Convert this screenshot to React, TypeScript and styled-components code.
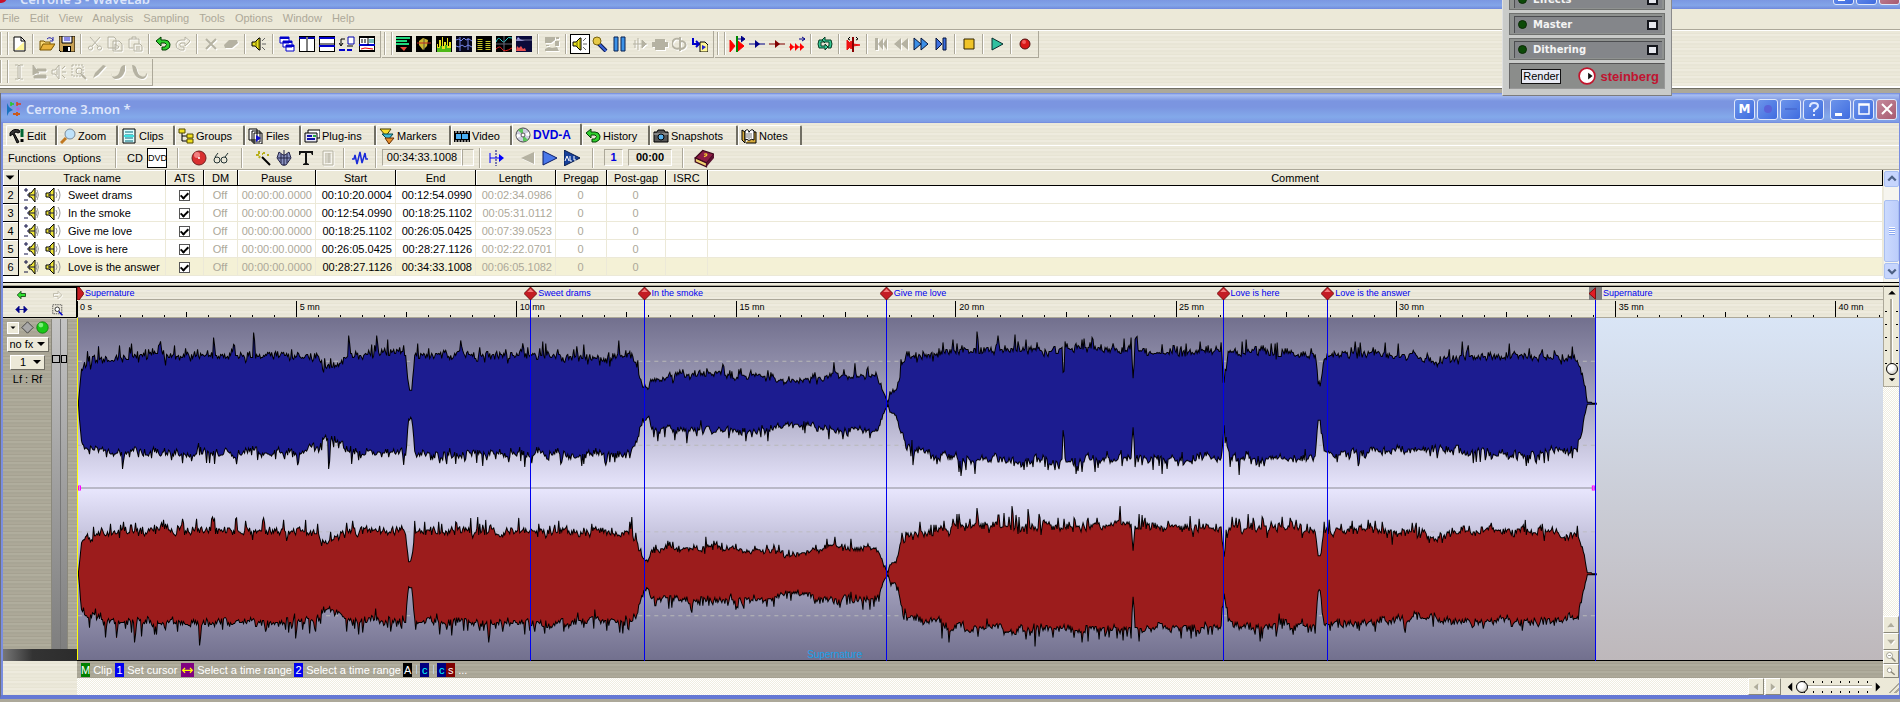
import React from 'react';
import styled, { createGlobalStyle, css } from 'styled-components';

const cream = 'repeating-linear-gradient(180deg,#ebe8d9 0 2px,#e7e4d4 2px 3px,#eeebde 3px 5px,#e8e5d6 5px 7px)';
const stone = 'repeating-linear-gradient(180deg,#aca898 0 2px,#a5a191 2px 3px,#b0ad9d 3px 5px,#a8a595 5px 7px)';
const checker = 'repeating-conic-gradient(#fff 0 25%,#efede0 0 50%) 0 0/2px 2px';

const GlobalStyle = createGlobalStyle`
  *{box-sizing:border-box}
  body{margin:0;background:#aca899;font:11px "Liberation Sans",Arial,sans-serif;color:#000}
  button,select,input{font:inherit;color:inherit;margin:0}
  button{border:0;padding:0;background:none}
`;

/* ---------- icons ---------- */

type Art = Record<string, React.ReactNode>;

const speaker = (
  <>
    <path d="M1 6h3l4-4h1v12H8L4 10H1z" fill="#e8e020" stroke="#000" />
    <path d="M5 5v6M8 3v10" stroke="#6a6400" />
    <path d="M11 8h4M11 5l3-3M11 11l3 3" stroke="#666" />
  </>
);
const grey = '#b5b2a2';

const art: Art = {
  newFile: <><path d="M3 1h7l4 4v10H3z" fill="#fff" stroke="#000" /><path d="M4 14L13 6v8z" fill="#fff79a" /><path d="M10 1v4h4" fill="none" stroke="#000" /></>,
  open: <><path d="M1 14V5h4l1 1h5v3" fill="#f7d774" stroke="#7a5600" /><path d="M1 14l3-6h12l-4 6z" fill="#e8b23a" stroke="#7a5600" /><path d="M8 3q3-3 6 1M14 1v4h-3" fill="none" stroke="#22a" /></>,
  save: <><path d="M0 0h16v16H2L0 14z" fill="#c9a255" stroke="#000" /><path d="M3 0h10v7H3z" fill="#eef" stroke="#000" /><path d="M5 2h6M5 4h6" stroke="#22c" /><path d="M4 10h8v6H4z" fill="#000" /><path d="M9 11h2v4H9z" fill="#fff" /></>,
  cut: <path d="M3 1l8 9M13 1L5 10M3 10a2 2 0 1 0 1 4 2 2 0 0 0-1-4M12 10a2 2 0 1 0 1 4 2 2 0 0 0-1-4" fill="none" stroke={grey} />,
  copy: <path d="M1 1h6l2 2v9H1zM6 5h6l3 3v7H6zM8 8l4 3-4 3z" fill="none" stroke={grey} />,
  paste: <path d="M2 3h10v5M2 3v9h4M5 3V1h4v2M7 8h6l2 2v5H7zM9 11h4M9 13h4" fill="none" stroke={grey} />,
  undo: <path d="M6 1L1 5l5 5V7h4q3 1 0 4H7v3h4q5-2 4-6-1-4-5-4H6z" fill="#2fd02f" stroke="#033d03" />,
  redo: <path d="M10 1l5 4-5 5V7H6q-3 1 0 4h3v3H5Q0 12 1 8q1-4 5-4h4z" fill="none" stroke={grey} />,
  del: <path d="M3 3l10 10M13 3L3 13" stroke={grey} strokeWidth="2" />,
  erase: <path d="M6 4h8l1 3-6 5H2L1 9z" fill={grey} />,
  speaker,
  cascade: <g fill="#fff" stroke="#00c"><path d="M1 1h9v6H1zM4 5h9v6H4zM7 9h8v6H7z" /><path d="M1 2h9M4 6h9M7 10h8" strokeWidth="2" /></g>,
  tileV: <><path d="M0 0h16v16H0z" fill="#fff" stroke="#000" strokeWidth="2" /><path d="M8 0v16" stroke="#000" /><path d="M0 2h7M9 2h7" stroke="#00a" strokeWidth="2" /></>,
  tileH: <><path d="M0 0h16v16H0z" fill="#fff" stroke="#000" strokeWidth="2" /><path d="M0 8h16" stroke="#000" /><path d="M0 2h16M0 10h16" stroke="#00c" strokeWidth="2" /></>,
  arrange: <><path d="M9 1h6v7H9z" fill="#fff" stroke="#00a" /><path d="M6 3H2v6M0 7l2 3 2-3M8 10h6" fill="none" stroke="#000" /><path d="M0 13h6v2H0zM8 13h5v2H8z" fill="#00c" /></>,
  layout: <><path d="M0 1h16v14H0z" fill="#fff" stroke="#000" strokeWidth="2" /><path d="M0 9h16" stroke="#00c" strokeWidth="2" /><path d="M9 1v8M2 4h2M5 4h2M2 6h2M5 6h2" stroke="#000" /><path d="M10 3h5v4h-5z" fill="#7bb" /><path d="M2 13l4-1 8 1" stroke="#e00" fill="none" /></>,
  meter1: <><path d="M0 0h16v16H0z" /><path d="M0 2h14M0 5h11M0 8h13" stroke="#1fd67c" strokeWidth="2" /><path d="M4 11h7l-3 4z" fill="#e84a3c" /></>,
  meter2: <><path d="M0 0h16v16H0z" /><path d="M3 5l4-3 5 2-1 6-4 4-4-5z" fill="#cbb62e" /><path d="M8 3v11" stroke="#554" /><path d="M1 7h14" stroke="#b22" /></>,
  meter3: <><path d="M0 0h16v16H0z" /><path d="M1 16V8h1v3h1V4h2v8h1V1h1v9h1V6h2v5h1V2h1v8h1V6h2v10z" fill="#e8e01c" /><path d="M1 16V12h3v-2h2v3h3v-4h2v3h4v4z" fill="#4db818" /></>,
  meter4: <><path d="M0 0h16v16H0z" fill="#06061a" /><path d="M0 4l3-1 2 2 3-3 2 2 3-1 3 2M0 10l3 1 3-2 3 2 3-2 4 2M4 1v14M12 2v12" stroke="#7484e8" fill="none" /></>,
  meter5: <><path d="M0 0h16v16H0z" /><path d="M4 3v12M12 5v10" stroke="#c9c62c" strokeWidth="5" strokeDasharray="1 1" /></>,
  meter6: <><path d="M0 0h16v16H0z" /><path d="M0 6q2-6 5-2t5 0 6-2" stroke="#2ed3d3" fill="none" /><path d="M0 8h16M8 0v16" stroke="#667" /><path d="M0 13q4-4 6 0t10-1" stroke="#e02020" fill="none" /></>,
  meter7: <><path d="M0 0h16v16H0z" fill="#0a0a3a" /><path d="M0 5l2-4 2 2 2 1 3 1H0z" fill="#a4a4f4" /><path d="M0 4h16" stroke="#779" /><path d="M0 15l1-5 2 2 2-2 2 3 2-1 1 3z" fill="#e85050" /></>,
  scene: <><path d="M1 1h10v3l-4 3H1zM11 5h4v5h-4zM1 13l4-2 3 1 5-1 2 4H1z" fill={grey} /><path d="M12 1h3v2h-3zM2 9h3v1H2z" fill={grey} /></>,
  mic: <><path d="M6 7l8 8" stroke="#0a1a55" strokeWidth="4" /><path d="M7 8l7 7" stroke="#3a62d8" strokeWidth="2" /><circle cx="5" cy="5" r="4" fill="#e6c948" stroke="#7a6410" /></>,
  pause: <g fill="#3c92e8" stroke="#082050"><path d="M2 1h4v14H2zM9 1h4v14H9z" /></g>,
  jog: <path d="M1 8h14M3 4v8M6 2v12M10 4l4 4-4 4z" fill={grey} stroke={grey} />,
  bar: <path d="M0 6h16v5H0zM3 3h10v11H3z" fill={grey} />,
  loopG: <path d="M7 3a5 5 0 1 0 2 8M8 5a5 4 0 1 1 1 8M8 1v14" fill="none" stroke={grey} strokeWidth="2" />,
  toFile: <><path d="M1 2v6h5M4 5l3 3-3 3" fill="none" stroke="#00c" strokeWidth="2" /><path d="M8 6h5l3 3v7H8z" fill="#fff79a" stroke="#000" /><path d="M10 9l4 2-4 3z" fill="#22c" /></>,
  seek1: <><path d="M1 4l5 6-5 6zM9 5l6 5-6 5z" fill="#f00" stroke="#f00" /><path d="M8 0v16" stroke="#080" strokeWidth="2" /><path d="M9 3h6M12 0l4 3-4 3" fill="#008" stroke="#008" /></>,
  seek2: <><path d="M0 8h16" stroke="#008" /><path d="M6 4l5 4-5 4z" fill="#008" /></>,
  seek3: <><path d="M0 8h16" stroke="#800000" /><path d="M6 4l5 4-5 4z" fill="#800000" /></>,
  seek4: <><path d="M0 11h15" stroke="#f00" /><path d="M1 7l4 4-4 4zM6 7l4 4-4 4zM11 7l4 4-4 4z" fill="#f00" /><path d="M10 3h6M13 1l3 2-3 2" fill="none" stroke="#008" /></>,
  loop: <path d="M5 4H2Q0 8 2 12h6v2l3-3-3-3v2H4V6h8v4h-1v2h3q2-4 0-8H8V1L5 4l3 3" fill="#35c896" stroke="#083c22" />,
  scrub: <><path d="M2 4l3 3 1-2 2 3 7 1-7 1-2 3-1-2-3 3z" fill="#e11" stroke="#e11" /><path d="M8 1v15" stroke="#800" strokeWidth="2" /><path d="M5 1l-2 2 2 1M11 1l2 2-2 1" fill="none" stroke="#000" /></>,
  first: <path d="M2 2h3v12H2zM10 2v12L5 8zM14 2v12l-4-6z" fill={grey} />,
  rew: <path d="M8 2v12L1 8zM15 2v12L8 8z" fill={grey} />,
  fwd: <path d="M1 2l7 6-7 6zM8 2l7 6-7 6z" fill="#3c8fe6" stroke="#06153c" />,
  last: <path d="M3 2l6 6-6 6zM10 2h3v12h-3z" fill="#3c6fe0" stroke="#06153c" />,
  stop: <path d="M3 3h10v10H3z" fill="#f0c428" stroke="#302400" />,
  play: <path d="M3 2l11 6-11 6z" fill="#30c0a0" stroke="#062c2c" />,
  rec: <><circle cx="8" cy="8" r="5" fill="#d81818" stroke="#501010" /><circle cx="7" cy="6" r="2" fill="#f25c5c" /></>,
  ibeam: <path d="M4 1h3l1 1 1-1h3M4 15h3l1-1 1 1h3M7 2v12M9 2v12" fill="none" stroke={grey} />,
  pointer: <path d="M2 1v10l3-2h3L2 1M6 5h9v2H6zM7 11h8v3H3v-2z" fill={grey} stroke={grey} />,
  spkG: <path d="M1 6h3l4-5v14L4 10H1zM11 8h4M11 5l3-3M11 11l3 3M6 5v6" fill="none" stroke={grey} />,
  zoomG: <><path d="M1 1h11v11H1z" fill="none" stroke={grey} strokeDasharray="2 1" /><circle cx="8" cy="7" r="3" fill="none" stroke={grey} /><path d="M10 10l5 5" stroke={grey} strokeWidth="2" /></>,
  penG: <path d="M2 14l2-5 8-8 3 1-8 9z" fill={grey} />,
  fadeIn: <path d="M0 9q0 5 5 3 3-1 4-6 1-5 5-5v6q-3 8-9 8-4 0-5-6z" fill={grey} />,
  fadeOut: <path d="M1 1q4 0 5 5 1 5 4 6 5 2 5-3l1 1q-1 5-5 5-6 0-9-8z" fill={grey} />,
  hammer: <><path d="M1 5q3-5 9-3l1 2-2 1-2-1-2 1 5 9-2 1L4 6 1 8z" fill="#333" stroke="#000" /><path d="M13 1v8" stroke="#063" strokeWidth="3" /><path d="M13 11v3" stroke="#000" strokeWidth="3" /></>,
  lens: <><path d="M1 15l5-5" stroke="#c07820" strokeWidth="3" /><circle cx="10" cy="6" r="5" fill="#bfe2fa" stroke="#7a8a99" /></>,
  clips: <><path d="M2 1h12v14H2z" fill="#dff" stroke="#000" /><path d="M4 4h8M4 7h8M4 10h8M4 13h8" stroke="#067" /><path d="M3 8h10" stroke="#3de0e0" strokeWidth="2" /></>,
  groups: <><path d="M4 4v9h6M4 8h6" fill="none" stroke="#000" /><path d="M1 1h6v4H1zM9 6h6v4H9zM9 11h6v4H9z" fill="#f0e020" stroke="#554a00" /></>,
  files: <><path d="M1 1h8v11H1zM4 3h8v11H4zM6 5h8v11H6z" fill="#fff" stroke="#000" /><path d="M8 7l5 3-5 4z" fill="#11c" /></>,
  plug: <><path d="M4 2h12v8H4z" fill="#fff" stroke="#000" /><path d="M1 5h12v9H1z" fill="#e8e8f4" stroke="#000" /><path d="M3 8h5M3 11h8" stroke="#11a" strokeWidth="2" /><path d="M9 8h3" stroke="#2a4" strokeWidth="2" /></>,
  markers: <><path d="M1 1h11l-5 7z" fill="#f7dc2c" stroke="#443c00" /><path d="M3 6h11l-5 6z" fill="#3fb8d8" stroke="#044" /><path d="M6 10h9l-5 6z" fill="#e8902c" stroke="#642c00" /></>,
  video: <><path d="M0 3h16v11H0z" /><path d="M1 4h14M1 13h14" stroke="#fff" strokeDasharray="2 1" /><path d="M2 6h5v5H2zM8 6h6v5H8z" fill="#4ab0f4" /></>,
  disc: <><circle cx="8" cy="8" r="7" fill="#ccd" stroke="#444" /><path d="M8 8L3 3q3-2 5-1zM8 8l5 5q-2 2-5 1z" fill="#5ac85a" /><path d="M8 8l6-3q1 3 0 4zM8 8l-6 3q-1-3 0-4z" fill="#fff" /><circle cx="8" cy="8" r="2" fill="#fff" stroke="#555" /></>,
  camera: <><path d="M1 4h3l1-2h6l1 2h3v10H1z" fill="#555" stroke="#000" /><path d="M1 6h14" stroke="#bbb" /><circle cx="8" cy="9" r="3" fill="#5ab4f0" stroke="#000" /></>,
  notes: <><path d="M1 2l3 2v11l-3-3zM13 4h2v11H5" fill="#d8ac3c" stroke="#000" /><path d="M4 3q3-3 4 1 3-4 5-1v9q-3-2-5 1-2-3-4-1z" fill="#fff" stroke="#000" /><path d="M8 4v9M6 5v5M10 5v5" stroke="#777" /></>,
  recBig: <><circle cx="8" cy="8" r="7" fill="#d83030" stroke="#702020" /><circle cx="6" cy="5" r="3" fill="#f28080" /><circle cx="8" cy="8" r="1" fill="#fff" /></>,
  glasses: <g fill="none" stroke="#233" ><circle cx="4" cy="10" r="3" /><circle cx="11" cy="10" r="3" /><path d="M2 7l3-4M12 7l3-4" /></g>,
  wand: <><path d="M7 7l8 8" stroke="#000" strokeWidth="2" /><path d="M4 1v3M1 5h3M9 2v2M4 8l1-2M7 4h1M12 5h2" stroke="#b9b01c" strokeWidth="2" /></>,
  wrench: <><path d="M3 2l4 3 2 0 4-3 2 6-5 7H6L1 8z" fill="#8a92c0" stroke="#224" /><path d="M8 0v16M2 8h12M5 4v9M11 4v9" stroke="#224" /></>,
  tee: <path d="M1 1h14v4h-1l-1-2H9v10l2 1v1H5v-1l2-1V3H3L2 5H1z" fill="#111" />,
  doc: <path d="M3 1h10v14H3zM5 4h6M5 6h6M5 8h6M5 10h6M5 12h6M9 3v10" fill="none" stroke={grey} />,
  signal: <path d="M0 9h2l1-4 2 9 3-12 2 11 3-10 1 6h2" fill="none" stroke="#1a2ad8" strokeWidth="1.5" />,
  toMark: <><path d="M8 0v16" stroke="#008" strokeDasharray="2 1" /><path d="M2 3v10M2 8h12" stroke="#00f" /><path d="M11 4l5 4-5 4z" fill="#00f" /></>,
  playG: <path d="M14 2v12L1 8z" fill={grey} />,
  playB: <path d="M1 1l14 7-14 7z" fill="#4a78ea" stroke="#0a1c68" />,
  playAll: <><path d="M0 0l16 8L0 16z" fill="#17409a" stroke="#081c48" /><path d="M1 11l2-5 2 5M6 6v5h2M10 6v4h2" fill="none" stroke="#fff" /></>,
  book: <><path d="M1 8L7 2l9 3-6 7z" fill="#8c1c44" stroke="#40081c" /><path d="M1 8l9 4v3l-9-4z" fill="#f0d070" stroke="#40081c" /><path d="M10 12l6-7v3l-6 7z" fill="#5c1030" /><path d="M8 5q3-1 2 1l-2 1" fill="none" stroke="#f7d030" /></>,
  spkPM: <><path d="M5 6h2l4-5v14L7 10H5z" fill="#f0e838" stroke="#000" /><path d="M0 3h4M2 1v4M0 13h4M3 8h8" stroke="#114" /><path d="M13 3q3 5 0 10M12 5q2 3 0 6" fill="none" stroke="#999" /></>,
  spk: <><path d="M1 6h3l5-5v14l-5-5H1z" fill="#f0e838" stroke="#000" /><path d="M3 8h6M5 5v6" stroke="#114" /><path d="M13 2q4 6 0 12M11 5q2 3 0 6" fill="none" stroke="#999" /></>,
  green: <path d="M8 3L3 8l5 5v-3h6V6H8z" fill="#2fe02f" stroke="#053005" />,
  ghost: <path d="M8 3l5 5-5 5v-3H2V6h6z" fill="none" stroke={grey} />,
  both: <path d="M2 8h12M5 4L1 8l4 4zM11 4l4 4-4 4z" fill="#008" stroke="#008" />,
  region: <><path d="M1 1h12v12H1z" fill="none" stroke="#333" strokeDasharray="2 1" /><circle cx="7" cy="7" r="3" fill="#fff" stroke="#000" /><path d="M9 10l5 5" stroke="#00c" strokeWidth="2" /></>,
  diamondG: <path d="M8 1l7 7-7 7-7-7z" fill="#a8a8a8" stroke="#333" />,
  ball: <><circle cx="8" cy="8" r="7" fill="#18c818" stroke="#0a7a0a" /><circle cx="6" cy="5" r="3" fill="#7af07a" /></>,
  diamond: <><path d="M8 0l8 8-8 8-8-8z" fill="#c41c24" stroke="#5c0000" /><path d="M8 2l4 4H4z" fill="#f07a7a" /></>,
  cueIn: <path d="M8 0h2l6 8-6 8H8z" fill="#c81c24" stroke="#700000" />,
  cueOut: <><path d="M0 0h16v16H0z" fill="#808080" /><path d="M8 1v14L0 8z" fill="#e01c24" stroke="#700000" /></>,
  magA: <><circle cx="6" cy="6" r="4" fill="#fff" stroke="#8a8778" /><path d="M9 9l5 5" stroke="#8a8778" strokeWidth="2" /><path d="M4 6h4" stroke="#8a8778" /></>,
  magB: <><circle cx="6" cy="7" r="3" fill="#fff" stroke="#8a8778" /><path d="M8 9l5 4" stroke="#8a8778" strokeWidth="2" /></>,
  triU: <path d="M8 5l5 6H3z" fill="#b0ad9c" />,
  triD: <path d="M3 5h10l-5 6z" fill="#b0ad9c" />,
  triL: <path d="M11 3v10L5 8z" fill="#b0ad9c" />,
  triR: <path d="M5 3l6 5-6 5z" fill="#b0ad9c" />,
  blackU: <path d="M8 5l5 5H3z" />,
  blackD: <path d="M3 5h10l-5 5z" />,
  blackL: <path d="M11 2v12L5 8z" />,
  blackR: <path d="M5 2l6 6-6 6z" />,
  chevU: <path d="M3 10l5-5 5 5" fill="none" stroke="#4d6185" strokeWidth="3" />,
  chevD: <path d="M3 6l5 5 5-5" fill="none" stroke="#4d6185" strokeWidth="3" />,
  mono: <><path d="M1 2v13l2-4 4-2-4-3z" fill="#1a74c0" /><path d="M5 1v4M5 3h3" stroke="#2c2" strokeWidth="1.5" /><path d="M11 1v4M11 3h4" stroke="#e03c1c" strokeWidth="1.5" /><path d="M10 8h4M12 6v4" stroke="#c45ad8" /><path d="M7 13h7M11 11v4" stroke="#c85a1c" strokeWidth="2" /></>,
  steinberg: <><circle cx="8" cy="8" r="7" fill="#fff" stroke="#c2142c" strokeWidth="1.5" /><path d="M9 5l4 3-4 3z" fill="#111" /></>,
};

const Svg = styled.svg<{ $s: number; $ghost?: boolean }>`
  display:block;flex:none;width:${p => p.$s}px;height:${p => p.$s}px;
  ${p => p.$ghost && css`filter:drop-shadow(1px 1px 0 #fff);`}
`;
const ghosts = new Set(['cut', 'copy', 'paste', 'redo', 'del', 'erase', 'scene', 'jog', 'bar', 'loopG', 'first', 'rew', 'ibeam', 'pointer', 'spkG', 'zoomG', 'penG', 'fadeIn', 'fadeOut', 'doc', 'playG', 'ghost', 'triU', 'triD', 'triL', 'triR']);
const Icon = ({ name, size = 16 }: { name: string; size?: number }) => (
  <Svg $s={size} $ghost={ghosts.has(name)} viewBox="0 0 16 16" aria-hidden="true">{art[name]}</Svg>
);

/* ---------- application frame ---------- */

const Frame = styled.div`display:flex;flex-direction:column;height:100vh;min-height:560px;position:relative;overflow:hidden;`;
const AppTitle = styled.header`
  height:9px;flex:none;display:flex;align-items:flex-end;gap:2px;padding:0 0 3px 20px;overflow:hidden;position:relative;
  background:linear-gradient(#7b97e2,#83a5e8 60%,#7089dc);color:#dbe4fa;font:600 13px/14px "Noto Sans",sans-serif;
`;
const AppLogo = styled.span`position:absolute;left:-5px;top:-9px;width:12px;height:12px;border-radius:50%;background:#c8102c;`;
const AppButtons = styled.div`position:absolute;right:0;bottom:4px;display:flex;gap:2px;`;
const MenuBar = styled.nav`
  height:21px;flex:none;display:flex;align-items:center;gap:10px;padding:0 2px 2px;background:#ece9d8;border-bottom:1px solid #aca899;color:#aca899;
`;
const ToolArea = styled.div`flex:none;background:${cream};border-top:1px solid #fff;border-bottom:2px solid #fff;height:58px;`;
const ToolRow = styled.div`display:flex;height:28px;`;
const ToolGroup = styled.div<{ $lead?: boolean }>`
  display:flex;align-items:center;height:27px;padding:0 3px 0 ${p => (p.$lead ? 9 : 12)}px;position:relative;
  border-right:1px solid #aca899;border-bottom:1px solid #aca899;margin-right:1px;
  &::before{content:"";position:absolute;left:${p => (p.$lead ? 0 : 2)}px;top:1px;bottom:2px;width:6px;
    border:solid #aca899;border-width:0 1px;box-shadow:inset 1px 0 #fff,1px 0 #fff;}
`;
const Tool = styled.button<{ $on?: boolean }>`
  width:20px;height:20px;display:grid;place-items:center;
  ${p => p.$on && css`background:#fff;border:1px solid #000;`}
`;
const Sep = styled.span<{ $w?: number }>`
  width:${p => p.$w ?? 8}px;height:20px;flex:none;background:linear-gradient(90deg,#aca899 50%,#fff 50%) center/2px 100% no-repeat;
`;
const Divider = styled.div`height:5px;flex:none;background:#aca899;border-top:1px solid #716f64;`;

const Tools = ({ items, lead }: { items: string; lead?: boolean }) => (
  <ToolGroup $lead={lead}>
    {items.split(' ').map((n, i) => n === '|' ? <Sep key={i} /> : (
      <Tool key={i} $on={n.endsWith('*')} aria-label={n.replace('*', '')}><Icon name={n.replace('*', '')} /></Tool>
    ))}
  </ToolGroup>
);

/* ---------- master section panel ---------- */

const Master = styled.aside`
  position:absolute;right:228px;top:-15px;width:170px;height:111px;padding:2px 6px 6px;display:flex;flex-direction:column;gap:3px;
  background:#c9cbc9;border:1px solid #dfe0df;border-right-color:#8a8a8a;border-bottom-color:#7c7c7c;
`;
const Slot = styled.div`
  height:22px;flex:none;display:flex;align-items:center;gap:6px;padding:0 4px;color:#f4f4f4;font:bold 10px "DejaVu Sans",sans-serif;
  background:#84868a;border:3px solid #8f9290;border-width:3px 3px 2px 5px;box-shadow:inset 1px 1px #4c4d50;outline:1px solid #6f716f;outline-offset:-1px;
`;
const Led = styled.i`width:9px;height:9px;border-radius:50%;background:#0c4a08;border:1px solid #0a2a06;`;
const SlotBox = styled.button`margin-left:auto;width:11px;height:10px;background:#e6e8ee;border:2px solid #14161c;`;
const Footer = styled.div`
  flex:1;display:flex;align-items:center;padding:0 5px 0 11px;background:#8b8d8b;border:1px solid #555;border-color:#555 #999 #999 #666;
  color:#c01430;font-weight:bold;font-size:13px;
`;
const Render = styled.button`width:41px;height:15px;background:#e8eaf4;border:1px solid #111;color:#000;font-size:11px;font-weight:normal;line-height:12px;margin-right:17px;`;
const Brand = styled.span`margin-left:4px;`;

/* ---------- montage window ---------- */

const Win = styled.section`flex:1;min-height:0;display:flex;flex-direction:column;padding:0 1px 0 2px;background:#7a8ee0;border-left:1px solid #6f6f78;border-bottom:4px solid #6478d4;margin-bottom:3px;`;
const WinTitle = styled.header`
  height:30px;flex:none;display:flex;align-items:center;gap:4px;padding:2px 2px 0 5px;margin-left:-2px;
  background:linear-gradient(#6f87dc 0,#a8bef2 2px,#7b95e0 8px,#7b95e0 14px,#83a9ea 24px,#7d9ae4 29px,#6c82da);
  color:#dde5fb;font:600 13px "Noto Sans","Open Sans",sans-serif;
`;
const WinButtons = styled.div`margin-left:auto;display:flex;gap:2px;`;
const WinButton = styled.button<{ $close?: boolean; $gap?: boolean; $dim?: boolean }>`
  width:21px;height:21px;border:1px solid #dfe8fb;border-radius:3px;display:grid;place-items:center;color:${p => (p.$dim ? '#5a62d8' : '#fff')};
  background:${p => (p.$close ? 'linear-gradient(135deg,#c48a9c,#a85a70)' : 'linear-gradient(135deg,#6c94ea,#3f6ce0)')};
  margin-left:${p => (p.$gap ? 4 : 0)}px;font:bold 12px "DejaVu Sans",sans-serif;
`;
const Tabs = styled.div`height:23px;flex:none;display:flex;align-items:flex-end;padding-left:3px;background:${cream};border-bottom:1px solid #fff;`;
const Tab = styled.button<{ $w: number; $on?: boolean }>`
  width:${p => p.$w}px;height:20px;display:flex;align-items:center;gap:2px;padding-left:2px;text-align:left;white-space:nowrap;
  border-top:1px solid #fff;border-left:1px solid #fff;border-right:2px solid #716f64;border-radius:2px 2px 0 0;
  ${p => p.$on && css`height:22px;color:#0000e0;font-weight:bold;font-size:12px;`}
`;
const Strip = styled.div`height:24px;flex:none;display:flex;align-items:center;padding-left:5px;background:${cream};border-bottom:1px solid #aca899;`;
const StripMenu = styled.button<{ $w: number }>`width:${p => p.$w}px;text-align:left;flex:none;`;
const Word = styled.button<{ $on?: boolean }>`
  width:20px;height:20px;font-size:11px;
  ${p => p.$on && css`background:#fff;border:1px solid #000;font-size:9px;`}
`;
const Readout = styled.output<{ $w: number; $tone?: string }>`
  width:${p => p.$w}px;height:17px;line-height:15px;text-align:center;border:1px solid #aca899;border-right-color:#fff;border-bottom-color:#fff;
  color:${p => p.$tone ?? '#000'};font-weight:${p => (p.$tone ? 'bold' : 'normal')};
`;
const Gap = styled.span<{ $w: number }>`width:${p => p.$w}px;flex:none;`;

/* ---------- track table ---------- */

const ListPane = styled.div`flex:none;height:113px;display:flex;background:#fff;border-bottom:1px solid #000;`;
const Table = styled.table`
  flex:1;width:100%;min-width:0;table-layout:fixed;border-collapse:separate;border-spacing:0;align-self:flex-start;
`;
const Th = styled.th`
  height:16px;padding:0;font-weight:normal;text-align:center;background:#ece9d8;border-right:1px solid #000;border-bottom:1px solid #000;
  box-shadow:inset 1px 1px #fff;line-height:14px;
`;
const Row = styled.tr<{ $sel?: boolean }>`td{background:${p => (p.$sel ? '#f4f1d6' : '#fff')}}`;
const Td = styled.td<{ $a?: string; $dim?: boolean }>`
  height:18px;padding:0 3px 0 2px;text-align:${p => p.$a ?? 'center'};color:${p => (p.$dim ? '#aca899' : '#000')};
  border-right:1px solid #ece9d8;border-bottom:1px solid #ece9d8;line-height:14px;white-space:nowrap;overflow:hidden;
`;
const RowHead = styled.th`
  height:18px;padding:0;font-weight:normal;text-align:center;background:#ece9d8;border-right:1px solid #000;border-bottom:1px solid #000;box-shadow:inset 1px 1px #fff;line-height:14px;
`;
const Track = styled.div`display:flex;align-items:center;gap:5px;padding-left:3px;`;
const TrackText = styled.span`margin-left:2px;`;
const Check = styled.input`
  appearance:none;width:11px;height:11px;border:1px solid #555;background:#fff;display:inline-grid;place-items:center;vertical-align:middle;
  &:checked::before{content:"";width:3px;height:6px;border:solid #000;border-width:0 2px 2px 0;transform:rotate(45deg);margin-top:-2px;}
`;
const Scroll = styled.div`width:16px;flex:none;display:flex;flex-direction:column;background:#f6f5ef;border-left:1px solid #eceadf;padding:1px 0;`;
const ScrollBtn = styled.button`height:16px;display:grid;place-items:center;background:#c6d5fd;border:1px solid #a9c0f2;border-radius:2px;`;
const Thumb = styled.div`
  height:62px;margin:13px 0 1px;border:1px solid #a9bff0;border-radius:2px;display:grid;place-items:center;background:linear-gradient(90deg,#cbdafe,#bccdfb);
  &::before{content:"";width:6px;height:8px;background:repeating-linear-gradient(#fff 0 1px,#8aa8f0 1px 2px);}
`;

const tracks: [number, string, string, string, string][] = [
  [2, 'Sweet drams', '00:10:20.0004', '00:12:54.0990', '00:02:34.0986'],
  [3, 'In the smoke', '00:12:54.0990', '00:18:25.1102', '00:05:31.0112'],
  [4, 'Give me love', '00:18:25.1102', '00:26:05.0425', '00:07:39.0523'],
  [5, 'Love is here', '00:26:05.0425', '00:28:27.1126', '00:02:22.0701'],
  [6, 'Love is the answer', '00:28:27.1126', '00:34:33.1008', '00:06:05.1082'],
];
const columns: [string, number | undefined][] = [
  ['Track name', 147], ['ATS', 38], ['DM', 34], ['Pause', 78], ['Start', 80], ['End', 80], ['Length', 80],
  ['Pregap', 51], ['Post-gap', 59], ['ISRC', 42], ['Comment', undefined],
];

/* ---------- timeline and waveform ---------- */

const SPAN = 41.08; // visible minutes
const W = 1805;
const END = 1517;
const at = (min: number) => (min / SPAN) * 100;

// [x, upper amplitude, lower amplitude]
const envelope: [number, number, number][] = [
  [0, 2, 2], [3, 36, 40], [10, 42, 45], [45, 47, 49], [110, 48, 50], [200, 48, 49], [240, 46, 46], [245, 36, 36], [262, 42, 41],
  [275, 49, 50], [327, 49, 49], [330, 14, 15], [333, 14, 15], [336, 48, 46], [342, 49, 50], [400, 48, 50], [480, 48, 50], [553, 47, 50], [558, 34, 40],
  [564, 16, 18], [570, 14, 14], [572, 24, 23], [590, 27, 26], [640, 28, 28], [690, 26, 27], [706, 21, 19], [725, 23, 22], [750, 28, 27],
  [797, 28, 28], [801, 20, 20], [805, 9, 8], [809, 1, 1], [811, 10, 8], [817, 13, 11], [822, 34, 30], [828, 44, 46], [840, 46, 47],
  [865, 49, 52], [880, 52, 56], [983, 53, 57], [984, 32, 32], [985, 32, 32], [986, 54, 57], [1052, 53, 56], [1054, 26, 22], [1056, 51, 55],
  [1142, 50, 54], [1145, 20, 20], [1149, 52, 50], [1155, 51, 55], [1236, 51, 53], [1239, 22, 18], [1241, 20, 16], [1245, 48, 50], [1290, 50, 50], [1353, 43, 44],
  [1390, 47, 49], [1450, 47, 50], [1498, 44, 45], [1504, 25, 20], [1508, 1, 1], [END, 0, 0],
];
const peaks: Record<string, [number, number][]> = {
  b1: [[82, 62], [135, 66], [175, 71], [270, 68], [298, 68], [898, 72], [919, 68]],
  b2: [[44, 66], [250, 66], [882, 73], [997, 71]],
  r1: [[880, 60], [898, 66], [933, 68], [949, 65]],
  r2: [[38, 64], [56, 69], [121, 72], [217, 65], [410, 69], [947, 66]],
};
const base = (x: number, k: 1 | 2) => {
  const i = Math.max(1, envelope.findIndex(e => e[0] >= x));
  const a = envelope[i - 1];
  const b = envelope[i];
  return a[k] + ((b[k] - a[k]) * (x - a[0])) / (b[0] - a[0]);
};
const edge = (seed: number, k: 1 | 2, scale: number, key: string) => {
  let s = seed;
  let drift = 0;
  const rnd = () => ((s = (s * 16807) % 2147483647) / 2147483647);
  const out: number[] = [];
  for (let x = 0; x <= END; x++) {
    // the right channel stays loud through the short drop at 20:40
    const b = base(key[0] === 'r' && x > 982 && x < 987 ? 982 : x, k) * scale;
    drift = drift * 0.75 + (rnd() - 0.5) * 4.5;
    const jitter = (rnd() - 0.5) * 6 + drift + (rnd() < 0.15 ? rnd() * 13 : 0) - (rnd() < 0.03 ? rnd() * 9 : 0);
    out.push(Math.max(0.5, b + jitter * Math.min(1, b / 32)));
  }
  peaks[key].forEach(([x, a]) => { out[x] = a; out[x + 1] = a - 8; });
  return out;
};
const channel = (cy: number, up: number[], down: number[]) =>
  'M' + up.map((a, x) => `${x + 1.5} ${Math.round(cy - a) + 0.5}`).join('L') +
  'L' + down.map((a, x) => `${x + 1.5} ${Math.round(cy + a) + 0.5}`).reverse().join('L') + 'Z';
const blue = channel(85, edge(11, 1, 1, 'b1'), edge(23, 2, 1, 'b2'));
const red = channel(256, edge(37, 1, 0.9, 'r1'), edge(51, 2, 0.97, 'r2'));

const Editor = styled.div`flex:1;min-height:0;display:grid;grid-template-columns:74px minmax(0,1fr) 16px;background:#aca899;`;
const Spacer = styled.div`height:3px;flex:none;background:#ece9d8;border-bottom:1px solid #aca899;`;
const Side = styled.div`display:flex;flex-direction:column;min-height:0;`;
const NavBox = styled.div`
  height:32px;flex:none;display:grid;grid-template-columns:1fr 1fr;place-items:center;background:${cream};border:1px solid #000;border-top-width:2px;border-left:0;
`;
const Mixer = styled.div`flex:1;display:grid;grid-template-columns:48px 17px 1fr;background:${stone};border-top:1px solid #c8c5b6;`;
const Controls = styled.div`display:flex;flex-direction:column;align-items:center;gap:3px;padding:2px 0 0 1px;`;
const IconRow = styled.div`display:flex;align-items:center;gap:2px;height:13px;`;
const Drop = styled.button`width:12px;height:12px;background:#ece9d8;border:1px solid #fff;display:grid;place-items:center;`;
const Pick = styled.label<{ $w: number }>`
  width:${p => p.$w}px;height:15px;position:relative;background:#ece9d8;border:1px solid #fff;border-right-color:#716f64;border-bottom-color:#716f64;
  select{appearance:none;border:0;background:none;width:100%;height:13px;padding:0 0 0 ${p => (p.$w > 38 ? 2 : 9)}px;line-height:13px;display:block;}
  &::after{content:"";position:absolute;right:3px;top:4px;border:4px solid transparent;border-top-color:#000;border-bottom:0;pointer-events:none;}
`;
const Faders = styled.div`
  display:grid;grid-template-columns:1fr 1fr;background:linear-gradient(#c4c4c4,#9c9c9c 55%,#7f7f7f);border:1px solid #8a887c;border-width:0 1px;
`;
const Fader = styled.div`padding-top:36px;&+&{border-left:1px solid #777;}&::before{content:"";display:block;height:6px;border:1px solid #000;background:#bbb;}`;
const Shade = styled.div`height:12px;flex:none;background:linear-gradient(90deg,#777,#333 40%,#2c2c2c);`;
const Pale = styled.div`height:17px;flex:none;background:${cream};`;

const Lane = styled.div`display:flex;flex-direction:column;min-height:0;position:relative;`;
const Ruler = styled.div`height:32px;flex:none;position:relative;border-top:1px solid #000;background:${cream};overflow:hidden;border-bottom:1px solid #aca899;`;
const RulerLine = styled.div`height:13px;border-bottom:1px solid #aca899;`;
const Ticks = styled.svg`display:block;width:100%;height:17px;`;
const Label = styled.span<{ $x: number }>`position:absolute;left:calc(${p => p.$x}% + 3px);top:15px;font-size:9px;line-height:11px;white-space:nowrap;`;
const Cue = styled.span<{ $x: number; $shift: number }>`
  position:absolute;left:${p => p.$x}%;top:0;margin-left:${p => p.$shift}px;display:flex;align-items:center;gap:1px;color:#0000f0;font-size:9px;line-height:15px;white-space:nowrap;
`;
const CueLine = styled.i<{ $x: number }>`position:absolute;left:${p => p.$x}%;top:13px;bottom:17px;width:1px;margin-left:-1px;background:#0000f0;`;
const Wave = styled.svg`display:block;width:100%;height:0;flex:1;border-bottom:1px solid #000;`;
const ClipName = styled.span`position:absolute;left:${at(16.61)}%;bottom:18px;color:#18a0e8;font-size:10px;line-height:11px;`;
const Info = styled.div`height:17px;flex:none;display:flex;align-items:center;padding-left:4px;background:${stone};color:#fff;`;
const Badge = styled.b<{ $bg: string; $fg?: string }>`
  min-width:9px;height:14px;line-height:14px;text-align:center;font-weight:normal;background:${p => p.$bg};color:${p => p.$fg ?? '#fff'};
`;
const Hint = styled.span<{ $w: number }>`width:${p => p.$w}px;padding-left:3px;white-space:nowrap;flex:none;`;
const Bar = styled.i`width:8px;height:9px;background:linear-gradient(#bcd,#bcd) center/1px 100% no-repeat;`;

const ZoomCol = styled.div`display:flex;flex-direction:column;background:${checker};min-height:0;`;
const VBox = styled.div`
  height:101px;flex:none;display:flex;flex-direction:column;align-items:center;background:#ece9d8;border-left:1px solid #aca899;border-top:1px solid #000;border-bottom:1px solid #aca899;
`;
const thumb = css`
  &::-webkit-slider-thumb{appearance:none;width:12px;height:12px;border-radius:50%;border:1px solid #000;background:radial-gradient(circle at 35% 35%,#fff 30%,#b8b5a6);}
`;
const VRange = styled.input`
  appearance:none;writing-mode:vertical-lr;direction:rtl;width:13px;height:76px;flex:none;
  background:linear-gradient(90deg,#aca899 50%,#fff 50%) center/3px 100% no-repeat,
    repeating-linear-gradient(180deg,transparent 0 12px,#000 12px 13px) 0 0/2px 100% no-repeat,
    repeating-linear-gradient(180deg,transparent 0 12px,#000 12px 13px) 100% 0/2px 100% no-repeat;
  ${thumb}
`;
const HRange = styled.input`
  appearance:none;width:76px;height:13px;
  background:linear-gradient(#aca899 50%,#fff 50%) center/100% 3px no-repeat,
    repeating-linear-gradient(90deg,transparent 0 8px,#000 8px 9px) 0 1px/100% 2px no-repeat,
    repeating-linear-gradient(90deg,transparent 0 8px,#000 8px 9px) 0 11px/100% 2px no-repeat;
  ${thumb}
`;
const Push = styled.button<{ $h?: number }>`
  width:16px;height:${p => p.$h ?? 17}px;flex:none;display:grid;place-items:center;overflow:hidden;background:#ece9d8;border:1px solid #fff;border-right-color:#8a887a;border-bottom-color:#8a887a;
`;
const Fill = styled.div`flex:1;`;
const Bottom = styled.div`height:17px;flex:none;display:flex;align-items:center;background:#ece9d8;`;
const BottomLeft = styled.div`width:74px;height:17px;background:${cream};`;
const HTrack = styled.div`flex:1;height:17px;background:${checker};display:flex;justify-content:flex-end;gap:1px;`;
const HBox = styled.div`width:118px;display:flex;align-items:center;padding-left:3px;`;
const Grip = styled.i`margin-left:auto;width:12px;height:13px;background:repeating-linear-gradient(135deg,#ece9d8 0 2px,#aca899 2px 4px);clip-path:polygon(100% 0,100% 100%,0 100%);`;

const cues: [string, number][] = [
  ['Sweet drams', 10.333], ['In the smoke', 12.91], ['Give me love', 18.42], ['Love is here', 26.08], ['Love is the answer', 28.46],
];
const tabs: [string, string, number][] = [
  ['Edit', 'hammer', 51], ['Zoom', 'lens', 61], ['Clips', 'clips', 57], ['Groups', 'groups', 70], ['Files', 'files', 56], ['Plug-ins', 'plug', 75],
  ['Markers', 'markers', 75], ['Video', 'video', 61], ['DVD-A', 'disc', 70], ['History', 'undo', 68], ['Snapshots', 'camera', 88], ['Notes', 'notes', 64],
];

const Waveform = () => (
  <Wave viewBox={`0 0 ${W} 343`} preserveAspectRatio="none" shapeRendering="crispEdges" role="img" aria-label="Stereo waveform">
    <defs>
      <linearGradient id="clip" x1="0" y1="0" x2="0" y2="1">
        <stop offset="0" stopColor="#72708e" /><stop offset=".25" stopColor="#a8a6c0" /><stop offset=".5" stopColor="#e8e6fd" />
        <stop offset=".75" stopColor="#a8a6c2" /><stop offset="1" stopColor="#72708e" />
      </linearGradient>
      <linearGradient id="rest" x1="0" y1="0" x2="0" y2="1"><stop offset="0" stopColor="#d9e5f6" /><stop offset="1" stopColor="#beb8bb" /></linearGradient>
    </defs>
    <rect width={W} height="343" fill="url(#rest)" />
    <rect width={END} height="343" fill="url(#clip)" />
    <path d={`M1 43.5H${END}M1 127.5H${END}M1 214.5H${END}M1 298.5H${END}`} stroke="#b8b8b8" strokeDasharray="4 4" />
    <path d={`M1 170.5H${END}`} stroke="#8c8c94" />
    <path d={blue} fill="#1c1c90" stroke="#000" />
    <path d={red} fill="#9c1c1c" stroke="#000" />
    <path d="M.5 0V343" stroke="#ffff00" />
    <path d={`M1.5 168.5h2v4h-2zM${END - 3}.5 168.5h2v4h-2z`} stroke="#f0f" fill="none" />
  </Wave>
);

const tickPath = () => {
  let d = '';
  for (let i = 0; i * 0.5 < SPAN; i++) {
    const x = Math.floor((i * 0.5 * W) / SPAN) + 0.5;
    d += `M${x} ${i % 10 === 0 ? 1 : i % 5 === 0 ? 12 : 15}V18`;
  }
  return d;
};

export default function App() {
  return (
    <Frame>
      <GlobalStyle />
      <AppTitle><AppLogo />Cerrone 3 - WaveLab
        <AppButtons><WinButton aria-label="Minimize application"><Svg $s={16} viewBox="0 0 16 16"><path d="M2 11h7v3H2z" fill="#fff" /></Svg></WinButton><WinButton aria-label="Restore application" /><WinButton $close aria-label="Close application" /></AppButtons>
      </AppTitle>
      <MenuBar>{['File', 'Edit', 'View', 'Analysis', 'Sampling', 'Tools', 'Options', 'Window', 'Help'].map(m => <button key={m}>{m}</button>)}</MenuBar>
      <ToolArea>
        <ToolRow>
          <Tools lead items="newFile | open save | cut copy paste | undo redo | del erase | speaker | cascade tileV tileH arrange layout" />
          <Tools items="meter1 meter2 meter3 meter4 meter5 meter6 meter7 | scene | speaker* mic pause jog bar loopG toFile" />
          <Tools items="seek1 seek2 seek3 seek4 | loop | scrub | first rew fwd last | stop | play | rec" />
        </ToolRow>
        <ToolRow><Tools lead items="ibeam pointer spkG zoomG penG fadeIn fadeOut" /></ToolRow>
      </ToolArea>
      <Divider />

      <Win>
        <WinTitle>
          <Icon name="mono" />Cerrone 3.mon *
          <WinButtons>
            <WinButton>M</WinButton>
            <WinButton $dim aria-label="Pin"><Svg $s={16} viewBox="0 0 16 16"><circle cx="8" cy="8" r="4" fill="#5a62d8" /></Svg></WinButton>
            <WinButton $dim aria-label="Shade"><Svg $s={16} viewBox="0 0 16 16"><path d="M2 7h12v2H2z" fill="#4a6ed4" /></Svg></WinButton>
            <WinButton aria-label="Help"><Svg $s={16} viewBox="0 0 16 16"><path d="M4 6q0-4 4-4t4 3q0 2-4 4v2M8 13v2" fill="none" stroke="#dfe9ff" strokeWidth="2" /></Svg></WinButton>
            <WinButton $gap aria-label="Minimize"><Svg $s={16} viewBox="0 0 16 16"><path d="M2 12h7v3H2z" fill="#fff" /></Svg></WinButton>
            <WinButton aria-label="Maximize"><Svg $s={16} viewBox="0 0 16 16"><path d="M3 3h10v10H3zM3 4h10" fill="none" stroke="#fff" strokeWidth="1.5" /></Svg></WinButton>
            <WinButton $close aria-label="Close"><Svg $s={16} viewBox="0 0 16 16"><path d="M3 3l10 10M13 3L3 13" stroke="#fff" strokeWidth="2" /></Svg></WinButton>
          </WinButtons>
        </WinTitle>

        <Tabs>{tabs.map(([t, i, w]) => <Tab key={t} $w={w} $on={t === 'DVD-A'}><Icon name={i} />{t}</Tab>)}</Tabs>

        <Strip>
          <StripMenu $w={55}>Functions</StripMenu><StripMenu $w={49}>Options</StripMenu>
          <Sep $w={8} /><Gap $w={5} />
          <Word>CD</Word><Gap $w={2} /><Word $on>DVD</Word>
          <Sep $w={22} />
          <Tool aria-label="Burn"><Icon name="recBig" /></Tool><Gap $w={2} /><Tool aria-label="Inspect"><Icon name="glasses" /></Tool>
          <Sep $w={22} />
          <Tool aria-label="Wizard"><Icon name="wand" /></Tool><Gap $w={1} /><Tool aria-label="Settings"><Icon name="wrench" /></Tool><Gap $w={2} />
          <Tool aria-label="Text"><Icon name="tee" /></Tool><Gap $w={2} /><Tool aria-label="Report"><Icon name="doc" /></Tool>
          <Sep $w={12} /><Tool aria-label="Signal"><Icon name="signal" /></Tool><Sep $w={12} />
          <Readout $w={80}>00:34:33.1008</Readout><Readout $w={12} /><Sep $w={12} />
          <Tool aria-label="Go to marker"><Icon name="toMark" /></Tool><Gap $w={12} />
          <Tool aria-label="Play back"><Icon name="playG" /></Tool><Gap $w={2} /><Tool aria-label="Play track"><Icon name="playB" /></Tool><Gap $w={2} />
          <Tool aria-label="Play all"><Icon name="playAll" /></Tool>
          <Sep $w={22} /><Readout $w={19} $tone="#0000e0">1</Readout><Gap $w={5} /><Readout $w={44} $tone="#000">00:00</Readout>
          <Sep $w={22} /><Tool aria-label="Manual"><Icon name="book" size={20} /></Tool>
        </Strip>

        <ListPane>
          <Table>
            <colgroup><col width={16} />{columns.map(([c, w]) => <col key={c} width={w} />)}</colgroup>
            <thead><tr><Th aria-label="Sort"><Icon name="blackD" size={14} /></Th>{columns.map(([c]) => <Th key={c} scope="col">{c}</Th>)}</tr></thead>
            <tbody>
              {tracks.map(([n, name, start, end, len]) => (
                <Row key={n} $sel={n === 6}>
                  <RowHead scope="row">{n}</RowHead>
                  <Td $a="left"><Track><Icon name="spkPM" /><Icon name="spk" /><TrackText>{name}</TrackText></Track></Td>
                  <Td><Check type="checkbox" defaultChecked aria-label={`ATS ${name}`} /></Td>
                  <Td $dim>Off</Td>
                  <Td $a="right" $dim>00:00:00.0000</Td>
                  <Td $a="right">{start}</Td>
                  <Td $a="right">{end}</Td>
                  <Td $a="right" $dim>{len}</Td>
                  <Td $dim>0</Td><Td $dim>0</Td><Td /><Td />
                </Row>
              ))}
            </tbody>
          </Table>
          <Scroll>
            <ScrollBtn aria-label="Scroll up"><Icon name="chevU" size={12} /></ScrollBtn>
            <Thumb />
            <ScrollBtn aria-label="Scroll down"><Icon name="chevD" size={12} /></ScrollBtn>
          </Scroll>
        </ListPane>
        <Spacer />

        <Editor>
          <Side>
            <NavBox><Icon name="green" size={12} /><Icon name="ghost" size={12} /><Icon name="both" size={13} /><Icon name="region" size={12} /></NavBox>
            <Mixer>
              <Controls>
                <IconRow><Drop aria-label="Track menu"><Icon name="blackD" size={8} /></Drop><Icon name="diamondG" size={13} /><Icon name="ball" size={13} /></IconRow>
                <Pick $w={42}><select aria-label="Effects"><option>no fx</option></select></Pick>
                <Pick $w={35}><select aria-label="Channel"><option>1</option></select></Pick>
                <span>Lf : Rf</span>
              </Controls>
              <Faders><Fader /><Fader /></Faders>
            </Mixer>
            <Shade />
            <Pale />
          </Side>
          <Lane>
            <Ruler>
              <RulerLine />
              <Ticks viewBox={`0 0 ${W} 17`} preserveAspectRatio="none" shapeRendering="crispEdges"><path d={tickPath()} stroke="#000" /></Ticks>
              {[0, 5, 10, 15, 20, 25, 30, 35, 40].map(m => <Label key={m} $x={at(m)}>{m ? `${m} mn` : '0 s'}</Label>)}
            </Ruler>
            <Waveform />
            {cues.map(([t, m]) => <CueLine key={t} $x={at(m)} />)}
            <CueLine $x={at(34.55)} />
            <Cue $x={0} $shift={-6}><Icon name="cueIn" size={13} />Supernature</Cue>
            {cues.map(([t, m]) => <Cue key={t} $x={at(m)} $shift={-7}><Icon name="diamond" size={13} />{t}</Cue>)}
            <Cue $x={at(34.55)} $shift={-7}><Icon name="cueOut" size={13} />Supernature</Cue>
            <ClipName>Supernature</ClipName>
            <Info>
              <Badge $bg="#008000">M</Badge><Hint $w={25}>Clip</Hint>
              <Badge $bg="#0000f0">1</Badge><Hint $w={57}>Set cursor</Hint>
              <Badge $bg="#800080" $fg="#ff0"><Svg $s={13} viewBox="0 0 16 16"><path d="M2 9h12M5 6L2 9l3 3M11 6l3 3-3 3" fill="none" stroke="#ff0" strokeWidth="1.5" /></Svg></Badge><Hint $w={100}>Select a time range</Hint>
              <Badge $bg="#0000f0">2</Badge><Hint $w={100}>Select a time range</Hint>
              <Badge $bg="#000">A</Badge><Bar /><Badge $bg="#000080" $fg="#0ff">c</Badge><Bar />
              <Badge $bg="#000080" $fg="#0ff">c</Badge><Badge $bg="#800000">s</Badge><Hint $w={20}>...</Hint>
            </Info>
          </Lane>
          <ZoomCol>
            <VBox><Icon name="blackU" size={12} /><VRange type="range" defaultValue={0} aria-label="Vertical zoom" /><Icon name="blackD" size={10} /></VBox>
            <Fill />
            <Push aria-label="Up"><Icon name="triU" size={12} /></Push>
            <Push aria-label="Down"><Icon name="triD" size={12} /></Push>
            <Push $h={14} aria-label="Zoom in"><Icon name="magA" size={12} /></Push>
            <Push $h={14} aria-label="Zoom out"><Icon name="magB" size={12} /></Push>
          </ZoomCol>
        </Editor>
        <Bottom>
          <BottomLeft />
          <HTrack><Push aria-label="Left"><Icon name="triL" size={12} /></Push><Push aria-label="Right"><Icon name="triR" size={12} /></Push></HTrack>
          <HBox><Icon name="blackL" size={12} /><HRange type="range" defaultValue={0} aria-label="Horizontal zoom" /><Icon name="blackR" size={12} /><Grip /></HBox>
        </Bottom>
      </Win>

      <Master>
        <Slot><Led />Effects<SlotBox aria-label="Effects panel" /></Slot>
        <Slot><Led />Master<SlotBox aria-label="Master panel" /></Slot>
        <Slot><Led />Dithering<SlotBox aria-label="Dithering panel" /></Slot>
        <Footer><Render>Render</Render><Icon name="steinberg" size={18} /><Brand>steinberg</Brand></Footer>
      </Master>
    </Frame>
  );
}
